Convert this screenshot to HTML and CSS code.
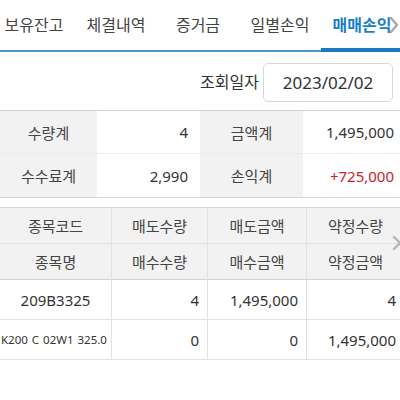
FILE: index.html
```html
<!DOCTYPE html>
<html lang="ko">
<head>
<meta charset="utf-8">
<link rel="stylesheet" href="styles.css">
</head>
<body>
<div class="screen">
  <nav class="tabs">
    <div class="tab">보유잔고</div>
    <div class="tab">체결내역</div>
    <div class="tab">증거금</div>
    <div class="tab">일별손익</div>
    <div class="tab active">매매손익</div>
  </nav>
  <svg class="chev chev-tab" width="10" height="18" viewBox="0 0 10 18"><path d="M2 2 L8 9 L2 16" fill="none" stroke="#9a9a9a" stroke-width="2.4" stroke-linecap="round" stroke-linejoin="round"/></svg>

  <div class="query">
    <span class="query-label">조회일자</span>
    <div class="date-box">2023/02/02</div>
  </div>

  <div class="summary">
    <div class="s-label">수량계</div>
    <div class="s-value">4</div>
    <div class="s-label">금액계</div>
    <div class="s-value">1,495,000</div>
    <div class="s-label">수수료계</div>
    <div class="s-value">2,990</div>
    <div class="s-label">손익계</div>
    <div class="s-value plus">+725,000</div>
  </div>

  <div class="grid-wrap">
    <div class="grid">
      <div class="h">종목코드</div>
      <div class="h">매도수량</div>
      <div class="h">매도금액</div>
      <div class="h">약정수량</div>
      <div class="h">종목명</div>
      <div class="h">매수수량</div>
      <div class="h">매수금액</div>
      <div class="h">약정금액</div>

      <div class="d c">209B3325</div>
      <div class="d r">4</div>
      <div class="d r">1,495,000</div>
      <div class="d r">4</div>
      <div class="d c small">K200 C 02W1 325.0</div>
      <div class="d r">0</div>
      <div class="d r">0</div>
      <div class="d r">1,495,000</div>
    </div>
    <svg class="chev chev-grid" width="10" height="16" viewBox="0 0 10 16"><path d="M2 2 L8 8 L2 14" fill="none" stroke="#a8a8a8" stroke-width="2.4" stroke-linecap="round" stroke-linejoin="round"/></svg>
  </div>
</div>
</body>
</html>
```
FILE: styles.css
```css
html, body {
  margin: 0;
  padding: 0;
  background: #fff;
}
body {
  width: 400px;
  height: 400px;
  overflow: hidden;
  font-family: "Noto Sans", "Noto Sans CJK KR", sans-serif;
  color: #333;
}
.screen {
  position: relative;
  width: 400px;
  height: 400px;
  overflow: hidden;
}
.tabs {
  display: flex;
  margin-left: -7px;
  height: 50px;
  border-bottom: 2px solid #4f95c9;
  width: 420px;
}
.tab {
  position: relative;
  flex: 0 0 82px;
  display: flex;
  align-items: center;
  justify-content: center;
  font-size: 16px;
  color: #444;
  padding-bottom: 2px;
  box-sizing: border-box;
}
.tab.active {
  color: #1c7fc4;
  font-weight: 700;
}
.tab.active::after {
  content: "";
  position: absolute;
  left: 0;
  right: 0;
  bottom: -2px;
  height: 4px;
  background: #1c7ac2;
}
.chev {
  position: absolute;
}
.chev-tab {
  left: 389px;
  top: 16px;
  opacity: 0.85;
}
.query {
  display: flex;
  justify-content: flex-end;
  align-items: center;
  gap: 4px;
  height: 58px;
  padding-right: 7px;
}
.query-label {
  font-size: 16px;
  color: #333;
}
.date-box {
  width: 130px;
  height: 39px;
  box-sizing: border-box;
  border: 1px solid #d8d8d8;
  border-radius: 5px;
  display: flex;
  align-items: center;
  justify-content: center;
  font-size: 17px;
  color: #333;
  margin-top: 2px;
}
.summary {
  display: grid;
  grid-template-columns: 97px 103px 103px 97px;
  grid-auto-rows: 43px;
  border-top: 1px solid #d0d0d0;
  border-bottom: 1px solid #d6d6d6;
}
.summary > div {
  display: flex;
  align-items: center;
  font-size: 15px;
  border-bottom: 1px solid #ececec;
}
.summary > div:nth-last-child(-n+4) {
  border-bottom: none;
}
.s-label {
  background: #f2f2f2;
  justify-content: center;
  color: #444;
}
.s-value {
  justify-content: flex-end;
  padding-right: 12px;
  color: #333;
}
.summary > div:nth-child(4), .summary > div:nth-child(8) {
  padding-right: 6px;
}
.s-value.plus {
  color: #c8232c;
}
.grid-wrap {
  position: relative;
  margin-top: 9px;
}
.grid {
  display: grid;
  grid-template-columns: 112px 96px 99px 98px;
  grid-template-rows: 36px 36px 40px 40px;
  width: 405px;
  border-top: 1px solid #d6d6d6;
}
.grid > div {
  display: flex;
  align-items: center;
  border-right: 1px solid #e2e2e2;
  border-bottom: 1px solid #e2e2e2;
  font-size: 15px;
  white-space: nowrap;
  overflow: hidden;
}
.grid .h {
  background: #f2f2f2;
  justify-content: center;
  color: #444;
}
.grid .h:nth-child(n+5):nth-child(-n+8) {
  border-bottom-color: #d2d2d2;
}
.grid .d.c {
  justify-content: center;
}
.grid .d.r {
  justify-content: flex-end;
  padding-right: 8px;
}
.grid .d.small {
  font-size: 11.5px;
  justify-content: flex-start;
  padding-left: 1px;
  word-spacing: 1px;
}
.chev-grid {
  left: 392px;
  top: 28px;
  opacity: 0.8;
}
```
